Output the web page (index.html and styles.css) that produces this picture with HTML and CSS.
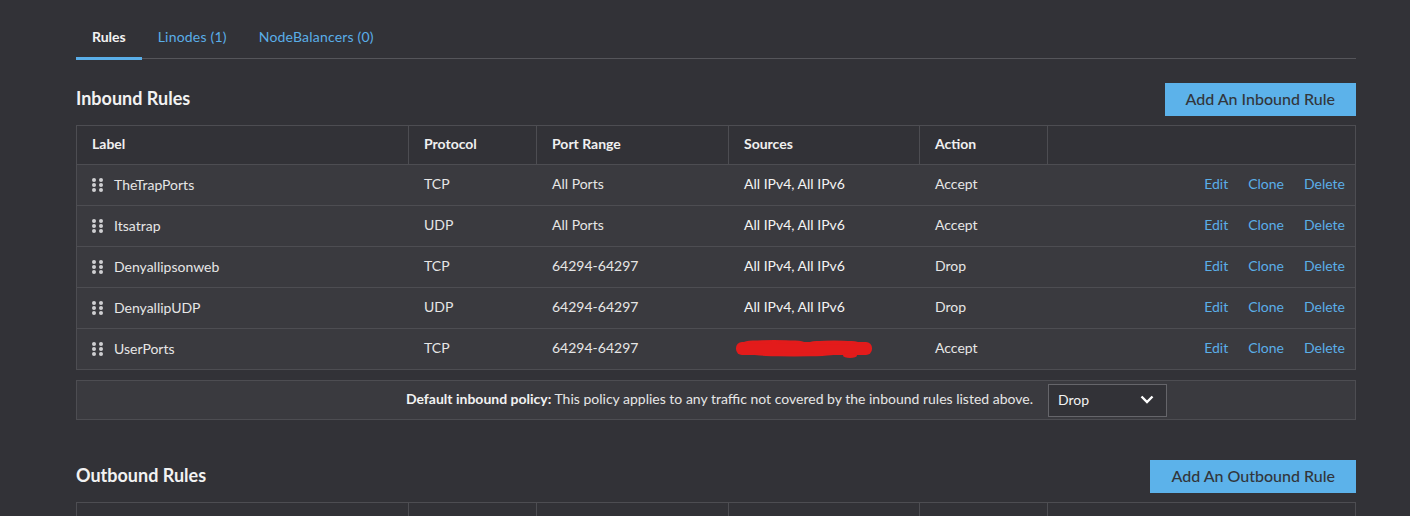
FILE: index.html
```html
<!DOCTYPE html>
<html>
<head>
<meta charset="utf-8">
<link rel="stylesheet" href="styles.css">
</head>
<body>
<div class="page">
  <div class="tabs">
    <div class="tab active">Rules</div>
    <div class="tab">Linodes (1)</div>
    <div class="tab">NodeBalancers (0)</div>
  </div>

  <div class="section-head first">
    <h2>Inbound Rules</h2>
    <button class="btn">Add An Inbound Rule</button>
  </div>
  <div class="table">
    <div class="row head">
      <div class="c c1">Label</div>
      <div class="c c2">Protocol</div>
      <div class="c c3">Port Range</div>
      <div class="c c4">Sources</div>
      <div class="c c5">Action</div>
      <div class="c c6"></div>
    </div>
    <div class="row">
      <div class="c c1"><span class="grip"><i></i><i></i><i></i><i></i><i></i><i></i></span><span class="lbl">TheTrapPorts</span></div>
      <div class="c c2">TCP</div>
      <div class="c c3">All Ports</div>
      <div class="c c4 src">All IPv4, All IPv6</div>
      <div class="c c5">Accept</div>
      <div class="c c6 acts"><a>Edit</a><a>Clone</a><a>Delete</a></div>
    </div>
    <div class="row">
      <div class="c c1"><span class="grip"><i></i><i></i><i></i><i></i><i></i><i></i></span><span class="lbl">Itsatrap</span></div>
      <div class="c c2">UDP</div>
      <div class="c c3">All Ports</div>
      <div class="c c4 src">All IPv4, All IPv6</div>
      <div class="c c5">Accept</div>
      <div class="c c6 acts"><a>Edit</a><a>Clone</a><a>Delete</a></div>
    </div>
    <div class="row">
      <div class="c c1"><span class="grip"><i></i><i></i><i></i><i></i><i></i><i></i></span><span class="lbl">Denyallipsonweb</span></div>
      <div class="c c2">TCP</div>
      <div class="c c3">64294-64297</div>
      <div class="c c4 src">All IPv4, All IPv6</div>
      <div class="c c5">Drop</div>
      <div class="c c6 acts"><a>Edit</a><a>Clone</a><a>Delete</a></div>
    </div>
    <div class="row">
      <div class="c c1"><span class="grip"><i></i><i></i><i></i><i></i><i></i><i></i></span><span class="lbl">DenyallipUDP</span></div>
      <div class="c c2">UDP</div>
      <div class="c c3">64294-64297</div>
      <div class="c c4 src">All IPv4, All IPv6</div>
      <div class="c c5">Drop</div>
      <div class="c c6 acts"><a>Edit</a><a>Clone</a><a>Delete</a></div>
    </div>
    <div class="row">
      <div class="c c1"><span class="grip"><i></i><i></i><i></i><i></i><i></i><i></i></span><span class="lbl">UserPorts</span></div>
      <div class="c c2">TCP</div>
      <div class="c c3">64294-64297</div>
      <div class="c c4 redact"><svg class="scribble" width="142" height="20" viewBox="0 0 142 20"><rect x="2" y="3" width="136" height="13" rx="6" fill="#e31b1b"/><ellipse cx="40" cy="3" rx="30" ry="2" fill="#e31b1b"/><ellipse cx="100" cy="3.5" rx="25" ry="2" fill="#e31b1b"/><ellipse cx="116" cy="16.5" rx="7" ry="2.5" fill="#e31b1b"/><ellipse cx="60" cy="15.5" rx="40" ry="2" fill="#e31b1b"/></svg></div>
      <div class="c c5">Accept</div>
      <div class="c c6 acts"><a>Edit</a><a>Clone</a><a>Delete</a></div>
    </div>
  </div>
  <div class="policy">
    <span class="policy-text"><b>Default inbound policy:</b> This policy applies to any traffic not covered by the inbound rules listed above.</span>
    <div class="select"><span>Drop</span><svg width="14" height="9" viewBox="0 0 14 9"><path d="M1.5 1.5 L7 7 L12.5 1.5" fill="none" stroke="#fff" stroke-width="2.4"/></svg></div>
  </div>

  <div class="section-head second">
    <h2>Outbound Rules</h2>
    <button class="btn">Add An Outbound Rule</button>
  </div>
  <div class="table">
    <div class="row head">
      <div class="c c1">Label</div>
      <div class="c c2">Protocol</div>
      <div class="c c3">Port Range</div>
      <div class="c c4">Destinations</div>
      <div class="c c5">Action</div>
      <div class="c c6"></div>
    </div>
  </div>
</div>
</body>
</html>
```

FILE: styles.css
```css
* { box-sizing: border-box; }
html, body { margin: 0; padding: 0; }
body {
  background: #323237;
  font-family: Lato, "Liberation Sans", sans-serif;
  font-size: 14px;
  color: #e6e6e6;
  overflow: hidden;
  height: 516px;
}
.page {
  width: 1280px;
  margin-left: 76px;
}
.tabs {
  display: flex;
  border-bottom: 1px solid #55555a;
  height: 59px;
}
.tab {
  padding: 27px 16px 0;
  color: #5aaee8;
  font-size: 14px;
  line-height: 20px;
  letter-spacing: 0.2px;
  position: relative;
}
.tab.active {
  color: #f2f2f2;
  font-weight: 700;
  letter-spacing: 0;
}
.tab.active::after {
  content: "";
  position: absolute;
  left: 0; right: 0; bottom: -2px;
  height: 3px;
  background: #5aaee8;
}
.section-head {
  display: flex;
  justify-content: space-between;
  align-items: center;
  height: 33px;
}
.section-head.first { margin-top: 24px; margin-bottom: 9px; }
.section-head.second { margin-top: 40px; margin-bottom: 9px; }
h2 {
  margin: 0 0 3px;
  font-size: 18px;
  font-weight: 700;
  color: #f2f2f2;
}
.btn {
  height: 33px;
  border: 0;
  background: #5cb2ea;
  color: #32363c;
  font-family: Lato, "Liberation Sans", sans-serif;
  font-size: 16px;
  font-weight: 500;
  padding: 0 21px 2px;
  cursor: pointer;
}
.table {
  border: 1px solid #4d4d52;
  border-bottom: 0;
}
.row {
  display: flex;
  height: 41px;
  align-items: center;
  background: #3a3a3f;
  border-bottom: 1px solid #4d4d52;
}
.row.head {
  background: #323237;
  height: 39px;
  font-weight: 700;
  color: #f0f0f0;
  align-items: stretch;
}
.row.head .c {
  display: flex;
  align-items: center;
  padding-bottom: 4px;
  border-right: 1px solid #4d4d52;
}
.row.head .c6 { border-right: 0; }
.c { padding-left: 15px; flex: none; }
.c1 { width: 332px; display: flex; align-items: center; }
.c2 { width: 128px; }
.c3 { width: 192px; }
.c4 { width: 191px; }
.c5 { width: 128px; }
.c6 { flex: 1; }
.row:not(.head) .c { padding-bottom: 4px; }
.src { color: #f4f4f4; }
.grip {
  display: grid;
  grid-template-columns: 4px 4px;
  grid-template-rows: 4px 4px 4px;
  column-gap: 3px;
  row-gap: 1px;
  margin-right: 11px;
  margin-top: 3px;
}
.grip i {
  display: block;
  width: 4px; height: 4px;
  border-radius: 50%;
  background: #cfcfd2;
}
.lbl { margin-top: 3px; }
.acts {
  display: flex;
  justify-content: flex-end;
  gap: 20px;
  padding-right: 10px;
}
.acts a { color: #5aaee8; cursor: pointer; }
.redact { padding-left: 5px; display: flex; align-items: center; margin-top: 4px; }
.scribble { display: block; }
.policy {
  margin-top: 10px;
  height: 40px;
  border: 1px solid #4d4d52;
  background: #3a3a3f;
  display: flex;
  justify-content: flex-end;
  align-items: center;
  padding-right: 188px;
}
.policy-text { font-size: 14px; color: #e6e6e6; margin-right: 15px; margin-bottom: 3px; }
.policy-text b { color: #f2f2f2; }
.select {
  width: 119px;
  height: 33px;
  border: 1px solid #65656a;
  background: #323237;
  display: flex;
  align-items: center;
  justify-content: space-between;
  padding: 0 12px 2px 9px;
  color: #f2f2f2;
  font-size: 14px;
}
```
